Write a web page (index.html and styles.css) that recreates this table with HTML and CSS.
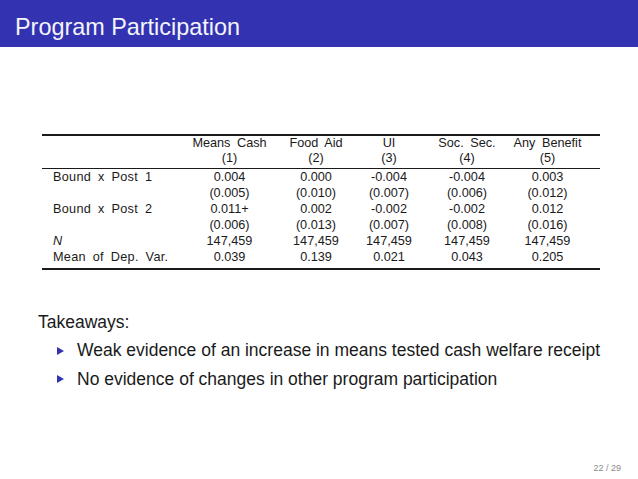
FILE: index.html
```html
<!DOCTYPE html>
<html>
<head>
<meta charset="utf-8">
<link rel="stylesheet" href="styles.css">
</head>
<body>
<div class="slide">
  <header class="frametitle">Program Participation</header>
  <section class="content">
    <div class="regtable">
      <div class="grid thead">
        <div class="c lbl"></div>
        <div class="c">Means Cash</div>
        <div class="c">Food Aid</div>
        <div class="c">UI</div>
        <div class="c">Soc. Sec.</div>
        <div class="c">Any Benefit</div>
        <div class="c lbl"></div>
        <div class="c">(1)</div>
        <div class="c">(2)</div>
        <div class="c">(3)</div>
        <div class="c">(4)</div>
        <div class="c">(5)</div>
      </div>
      <div class="grid tbody">
        <div class="c lbl">Bound x Post 1</div>
        <div class="c">0.004</div>
        <div class="c">0.000</div>
        <div class="c">-0.004</div>
        <div class="c">-0.004</div>
        <div class="c">0.003</div>
        <div class="c lbl"></div>
        <div class="c">(0.005)</div>
        <div class="c">(0.010)</div>
        <div class="c">(0.007)</div>
        <div class="c">(0.006)</div>
        <div class="c">(0.012)</div>
        <div class="c lbl">Bound x Post 2</div>
        <div class="c">0.011+</div>
        <div class="c">0.002</div>
        <div class="c">-0.002</div>
        <div class="c">-0.002</div>
        <div class="c">0.012</div>
        <div class="c lbl"></div>
        <div class="c">(0.006)</div>
        <div class="c">(0.013)</div>
        <div class="c">(0.007)</div>
        <div class="c">(0.008)</div>
        <div class="c">(0.016)</div>
        <div class="c lbl"><i>N</i></div>
        <div class="c">147,459</div>
        <div class="c">147,459</div>
        <div class="c">147,459</div>
        <div class="c">147,459</div>
        <div class="c">147,459</div>
        <div class="c lbl">Mean of Dep. Var.</div>
        <div class="c">0.039</div>
        <div class="c">0.139</div>
        <div class="c">0.021</div>
        <div class="c">0.043</div>
        <div class="c">0.205</div>
      </div>
    </div>
    <p class="takeaways">Takeaways:</p>
    <ul class="bullets">
      <li><span class="tri"></span>Weak evidence of an increase in means tested cash welfare receipt</li>
      <li><span class="tri"></span>No evidence of changes in other program participation</li>
    </ul>
  </section>
  <footer class="pagenum">22 / 29</footer>
</div>
</body>
</html>
```

FILE: styles.css
```css
html, body {
  margin: 0;
  padding: 0;
  background: #ffffff;
}

.slide {
  width: 638px;
  height: 479px;
  display: flex;
  flex-direction: column;
  font-family: "Liberation Sans", Arial, sans-serif;
  color: #1a1a1a;
  overflow: hidden;
}

.frametitle {
  background: #3333b2;
  color: #f4f4fa;
  font-size: 23.4px;
  line-height: 26px;
  height: 26px;
  padding: 14px 0 7px 15px;
}

.content {
  display: flex;
  flex-direction: column;
}

.regtable {
  margin: 87px 0 0 42px;
  width: 558px;
  font-size: 12.7px;
  word-spacing: 3px;
}

.grid {
  display: grid;
  grid-template-columns: 138px 99px 74px 72px 84px 77px;
  padding-right: 14px;
}

.thead {
  border-top: 2px solid #1a1a1a;
  border-bottom: 1px solid #1a1a1a;
  padding-bottom: 3px;
  line-height: 14.5px;
}

.tbody {
  border-bottom: 2px solid #1a1a1a;
  padding-bottom: 3px;
  line-height: 16px;
}

.c {
  display: flex;
  justify-content: center;
  white-space: nowrap;
  min-width: 0;
}

.c.lbl {
  justify-content: flex-start;
  padding-left: 11px;
  letter-spacing: 0.3px;
}

.takeaways {
  margin: 38px 0 0 38px;
  font-size: 17.5px;
  line-height: 28px;
}

.bullets {
  list-style: none;
  margin: 0;
  padding: 0 0 0 57px;
  font-size: 17.5px;
  line-height: 28.5px;
}

.bullets li {
  display: flex;
  align-items: center;
  white-space: nowrap;
}

.tri {
  width: 0;
  height: 0;
  border-top: 4px solid transparent;
  border-bottom: 4px solid transparent;
  border-left: 7px solid #3333b2;
  margin-right: 13px;
  margin-top: 1px;
}

.pagenum {
  margin-top: auto;
  text-align: right;
  font-size: 9px;
  line-height: 11px;
  color: #8a8a8a;
  padding: 0 17px 5px 0;
}
```
